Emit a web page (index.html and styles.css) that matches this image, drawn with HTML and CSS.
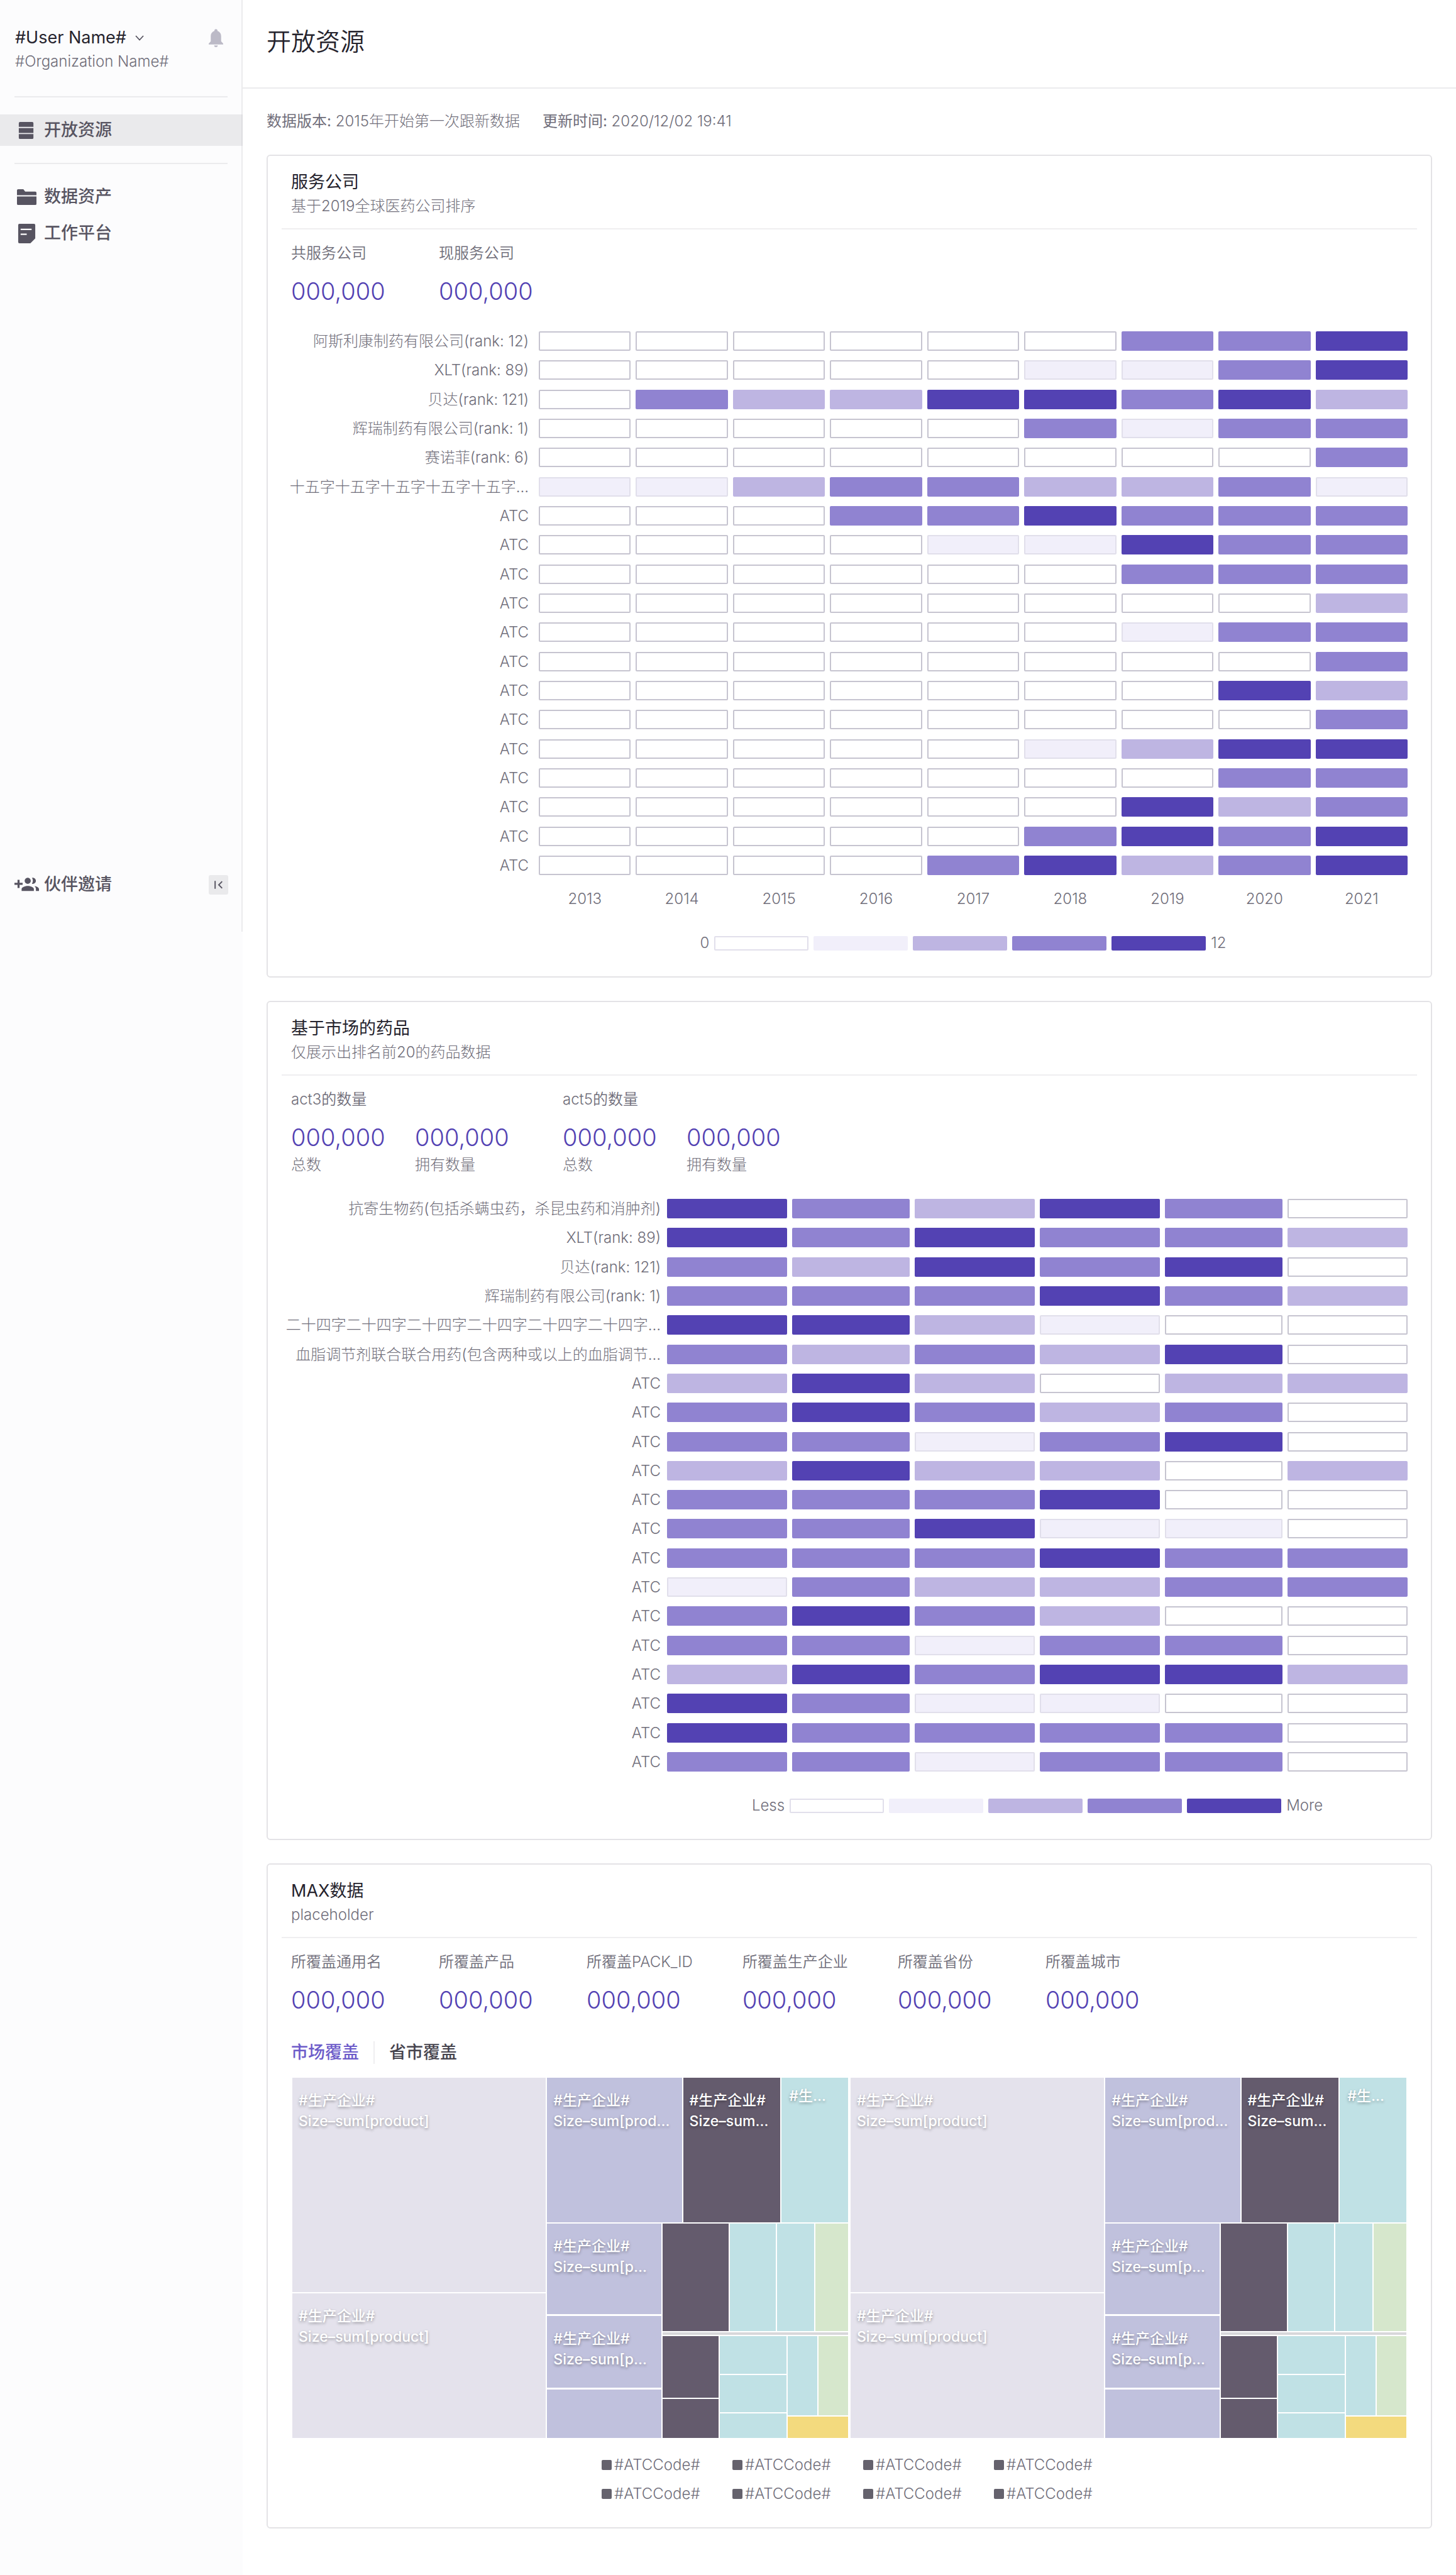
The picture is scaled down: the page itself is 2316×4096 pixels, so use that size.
FILE: index.html
```html
<!DOCTYPE html>
<html lang="zh-CN">
<head>
<meta charset="utf-8">
<meta name="viewport" content="width=device-width, initial-scale=1">
<title>开放资源</title>
<link rel="stylesheet" href="styles.css">
</head>
<body>
<div class="app">
  <aside class="sidebar">
    <div class="panel">
      <div class="profile">
        <div class="profile-top">
          <button class="user" type="button">#User Name#
            <svg class="chevron" viewBox="0 0 14 9"><path d="M1 1l6 6.500L13 1" fill="none" stroke="currentColor" stroke-width="1.800"/></svg>
          </button>
          <button class="bell" type="button" aria-label="通知">
            <svg viewBox="0 0 24 30"><path d="M12 0c-1.500 0-2.500 1-2.500 2.300v1C5.500 4.500 3.400 8 3.400 12v8.500L0 24v1.600h24V24l-3.400-3.500V12c0-4-2.100-7.500-6.100-8.700v-1C14.500 1 13.500 0 12 0zM9 27.200a3 2.800 0 0 0 6 0z" fill="currentColor"/></svg>
          </button>
        </div>
        <div class="org">#Organization Name#</div>
      </div>
      <nav class="nav">
        <hr>
        <a class="nav-item active" href="#open">
          <svg class="nav-icon" viewBox="0 0 32 32"><path d="M5 2h20a2 2 0 0 1 2 2v6H3V4a2 2 0 0 1 2-2zM3 12h24v8H3zM3 22h24v6a2 2 0 0 1-2 2H5a2 2 0 0 1-2-2z" fill="currentColor"/></svg>
          开放资源</a>
        <hr>
        <a class="nav-item" href="#assets">
          <svg class="nav-icon" viewBox="0 0 32 32"><path d="M2 3h8.500l3 4H30a2 2 0 0 1 2 2v4H0V5a2 2 0 0 1 2-2zM0 15h32v12a2 2 0 0 1-2 2H2a2 2 0 0 1-2-2z" fill="currentColor"/></svg>
          数据资产</a>
        <a class="nav-item" href="#workbench">
          <svg class="nav-icon" viewBox="0 0 32 32"><path fill-rule="evenodd" d="M4 0h24a2 2 0 0 1 2 2v22l-8 8H4a2 2 0 0 1-2-2V2a2 2 0 0 1 2-2zM6 8v2.200h18V8zM6 16v2.200h10V16z" fill="currentColor"/></svg>
          工作平台</a>
      </nav>
      <div class="panel-foot">
        <a class="invite" href="#invite">
          <svg class="invite-icon" viewBox="0 0 24 24"><path fill="currentColor" d="M8 10H5V7H3v3H0v2h3v3h2v-3h3v-2zm10 1c1.660 0 2.990-1.340 2.990-3S19.660 5 18 5c-.320 0-.630.050-.910.140.570.810.900 1.790.900 2.860s-.340 2.040-.900 2.860c.280.090.590.140.910.140zm-5 0c1.660 0 2.990-1.340 2.990-3S14.660 5 13 5s-3 1.340-3 3 1.340 3 3 3zm6.620 2.160c.830.730 1.380 1.660 1.380 2.840v2h3v-2c0-1.540-2.370-2.490-4.380-2.840zM13 13c-2 0-6 1-6 3v2h12v-2c0-2-4-3-6-3z"/></svg>
          伙伴邀请</a>
        <button class="collapse" type="button" aria-label="收起">
          <svg viewBox="0 0 32 32"><path d="M10.500 9.500v13M22 10.500L16.500 16l5.500 5.500" fill="none" stroke="currentColor" stroke-width="2"/></svg>
        </button>
      </div>
    </div>
  </aside>

  <main class="main">
    <header class="page-head"><h1>开放资源</h1></header>
    <div class="content">
      <div class="meta">
        <span><b>数据版本:</b> 2015年开始第一次跟新数据</span>
        <span><b>更新时间:</b> 2020/12/02 19:41</span>
      </div>

      <section class="card">
        <header class="card-head">
          <h2>服务公司</h2>
          <p>基于2019全球医药公司排序</p>
        </header>
        <div class="stats">
          <div class="stat"><span class="stat-label">共服务公司</span><span class="num">000,000</span></div>
          <div class="stat"><span class="stat-label">现服务公司</span><span class="num">000,000</span></div>
        </div>
        <div class="heat heat-company" id="company-heat"></div>
        <div class="years">
          <span>2013</span><span>2014</span><span>2015</span><span>2016</span><span>2017</span><span>2018</span><span>2019</span><span>2020</span><span>2021</span>
        </div>
        <div class="legend legend-company">
          <span>0</span><i class="l0"></i><i class="l1"></i><i class="l2"></i><i class="l3"></i><i class="l4"></i><span>12</span>
        </div>
      </section>

      <section class="card">
        <header class="card-head">
          <h2>基于市场的药品</h2>
          <p>仅展示出排名前20的药品数据</p>
        </header>
        <div class="stats stats-grouped">
          <div class="stat">
            <span class="stat-label">act3的数量</span>
            <div class="pair">
              <div><span class="num">000,000</span><small>总数</small></div>
              <div><span class="num">000,000</span><small>拥有数量</small></div>
            </div>
          </div>
          <div class="stat">
            <span class="stat-label">act5的数量</span>
            <div class="pair">
              <div><span class="num">000,000</span><small>总数</small></div>
              <div><span class="num">000,000</span><small>拥有数量</small></div>
            </div>
          </div>
        </div>
        <div class="heat heat-market" id="market-heat"></div>
        <div class="legend legend-market">
          <span>Less</span><i class="l0"></i><i class="l1"></i><i class="l2"></i><i class="l3"></i><i class="l4"></i><span>More</span>
        </div>
      </section>

      <section class="card">
        <header class="card-head">
          <h2>MAX数据</h2>
          <p>placeholder</p>
        </header>
        <div class="stats">
          <div class="stat"><span class="stat-label">所覆盖通用名</span><span class="num">000,000</span></div>
          <div class="stat"><span class="stat-label">所覆盖产品</span><span class="num">000,000</span></div>
          <div class="stat"><span class="stat-label">所覆盖PACK_ID</span><span class="num">000,000</span></div>
          <div class="stat"><span class="stat-label">所覆盖生产企业</span><span class="num">000,000</span></div>
          <div class="stat"><span class="stat-label">所覆盖省份</span><span class="num">000,000</span></div>
          <div class="stat"><span class="stat-label">所覆盖城市</span><span class="num">000,000</span></div>
        </div>
        <div class="tabs">
          <button class="tab selected" type="button">市场覆盖</button>
          <button class="tab" type="button">省市覆盖</button>
        </div>
        <div class="treemaps" id="treemaps">
          <div class="treemap">
            <div class="tm-major">
              <div class="tile mist"><p>#生产企业#</p><p>Size–sum[product]</p></div>
              <div class="tile mist"><p>#生产企业#</p><p>Size–sum[product]</p></div>
            </div>
            <div class="tm-minor">
              <div class="tm-top">
                <div class="tile iris"><p>#生产企业#</p><p>Size–sum[prod…</p></div>
                <div class="tile plum"><p>#生产企业#</p><p>Size–sum…</p></div>
                <div class="tile aqua narrow"><p>#生…</p></div>
              </div>
              <div class="tm-bottom">
                <div class="tm-stack">
                  <div class="tile iris"><p>#生产企业#</p><p>Size–sum[p…</p></div>
                  <div class="tile iris"><p>#生产企业#</p><p>Size–sum[p…</p></div>
                  <div class="tile iris"></div>
                </div>
                <div class="tm-rest">
                  <div class="tm-bars">
                    <div class="tile plum"></div><div class="tile aqua"></div><div class="tile aqua"></div><div class="tile leaf"></div>
                  </div>
                  <div class="tm-rule"></div>
                  <div class="tm-small">
                    <div class="tm-plums"><div class="tile plum"></div><div class="tile plum"></div></div>
                    <div class="tm-aquas"><div class="tile aqua"></div><div class="tile aqua"></div><div class="tile aqua"></div></div>
                    <div class="tm-last"><div class="tile aqua"></div><div class="tile leaf"></div><div class="tile sun"></div></div>
                  </div>
                </div>
              </div>
            </div>
          </div>
        </div>
        <ul class="codes">
          <li>#ATCCode#</li><li>#ATCCode#</li><li>#ATCCode#</li><li>#ATCCode#</li>
          <li>#ATCCode#</li><li>#ATCCode#</li><li>#ATCCode#</li><li>#ATCCode#</li>
        </ul>
      </section>
    </div>
  </main>
</div>
<script src="charts.js"></script>
</body>
</html>
```
FILE: styles.css
```css
* { box-sizing: border-box; }

body {
  margin: 0;
  background: #fff;
  color: #706e7a;
  font: 300 24px/32px Inter, "Noto Sans CJK SC", sans-serif;
}

h1, h2, p, ul { margin: 0; padding: 0; font-weight: inherit; }
button { border: 0; padding: 0; background: none; color: inherit; font: inherit; text-align: left; }
a { color: inherit; text-decoration: none; }
svg { display: block; flex: none; }

.app { display: flex; min-height: 100vh; }

/* Sidebar */
.sidebar { flex: none; width: 386px; background: #fcfcfd; }
.panel {
  display: flex;
  flex-direction: column;
  height: 1482px;
  border-right: 2px solid #ebebed;
}
.profile { padding: 44px 29px 0 24px; }
.profile-top { display: flex; align-items: center; justify-content: space-between; }
.user { display: flex; align-items: center; gap: 14px; color: #25232d; font-size: 27px; font-weight: 400; }
.chevron { width: 14px; height: 9px; color: #575461; }
.bell { color: #bcbac7; }
.bell svg { width: 23px; height: 29px; }
.org { margin-top: 6px; }
.nav { display: flex; flex-direction: column; margin-top: 39px; }
.nav hr { width: 339px; height: 2px; margin: 0 0 27px 23px; border: 0; background: #ebebed; }
.nav-item {
  display: flex;
  align-items: center;
  gap: 12px;
  height: 50px;
  margin-bottom: 8px;
  padding-left: 27px;
  color: #575461;
  font-size: 27px;
  font-weight: 500;
}
.nav-item.active { margin: 0 -2px 27px 0; border-right: 2px solid #dedde1; background: #eaeaec; }
.nav-icon { width: 31px; height: 31px; }
.panel-foot {
  display: flex;
  align-items: center;
  justify-content: space-between;
  margin-top: auto;
  padding: 0 21px 55px 23px;
}
.invite { display: flex; align-items: center; gap: 8px; color: #575461; font-size: 27px; font-weight: 500; line-height: 40px; }
.invite-icon { width: 39px; height: 39px; }
.collapse { border-radius: 3px; background: #eaeaec; color: #575461; }
.collapse svg { width: 31px; height: 31px; }

/* Page */
.main { flex: 1; min-width: 0; }
.page-head { padding: 38px 38px 45px; border-bottom: 2px solid #ebebed; }
.page-head h1 { color: #25232d; font-size: 39px; font-weight: 350; line-height: 56px; }
.content { padding: 36px 38px 72px; }
.meta { display: flex; gap: 36px; margin-bottom: 37px; }
.meta b { color: #706e7a; font-weight: 400; }

/* Cards */
.card { padding: 24px 37px 37px; border: 2px solid #e4e3e6; border-radius: 6px; }
.card + .card { margin-top: 37px; }
.card-head { margin: 0 -15px; padding: 0 15px 19px; border-bottom: 2px solid #efeef0; }
.card-head h2 { color: #25232d; font-size: 27px; font-weight: 400; line-height: 36px; }
.card-head p { margin-top: 4px; }

.stats { display: flex; gap: 79px; margin-top: 22px; }
.stat-label { display: block; margin-bottom: 20px; color: #706e7a; font-weight: 350; }
.stat { min-width: 156px; }
.num { display: block; color: #5342b3; font-size: 38px; font-weight: 350; line-height: 48px; }
.pair { display: flex; }
.pair > div { width: 197px; }
.pair small { display: block; margin-top: 4px; font-size: 24px; }
.stats-grouped { gap: 38px; }

/* Heat maps */
.heat { display: flex; flex-direction: column; justify-content: space-between; }
.heat-company { height: 865px; margin-top: 40px; }
.heat-market { height: 911px; margin-top: 38px; }
.heat-row { display: flex; gap: 16px; height: 31px; line-height: 31px; }
.heat-label { display: flex; flex: none; justify-content: flex-end; width: 378px; white-space: nowrap; }
.cells { display: grid; flex: 1; grid-template-columns: repeat(9, 1fr); column-gap: 8px; }
.cells i { border-radius: 2px; }
.heat-market .heat-row { gap: 10px; }
.heat-market .heat-label { width: 588px; }
.heat-market .cells { grid-template-columns: 99fr 97fr 99fr 99fr 97fr 99fr; }

.l0 { border: 2px solid #c6c4d0; background: #fff; }
.l1 { border: 2px solid #e1dfeb; background: #f1effa; }
.l2 { background: #beb5e2; }
.l3 { background: #9083d1; }
.l4 { background: #5342b3; }

.years { display: grid; grid-template-columns: repeat(9, 1fr); column-gap: 8px; margin: 22px 0 0 394px; text-align: center; }
.legend { display: flex; align-items: center; justify-content: center; gap: 8px; margin-top: 38px; }
.legend i { width: 150px; height: 23px; border-radius: 2px; }
.legend .l0 { border-color: #e1dfeb; }
.legend .l1 { border: 0; }
.legend-company { padding: 0 32px 0 394px; }
.legend-market { padding-left: 598px; }

/* Tabs */
.tabs { display: flex; margin-top: 42px; }
.tab { color: #45434d; font-size: 27px; font-weight: 500; line-height: 36px; }
.tab.selected { color: #6c5bc9; }
.tab + .tab { margin-left: 23px; padding-left: 23px; border-left: 2px solid #efeef0; }

/* Treemaps */
.treemaps { display: grid; grid-template-columns: 1fr 1fr; gap: 4px; height: 573px; margin: 22px 2px 0; }
.treemap, .treemap div { min-width: 0; }
.treemap { display: grid; grid-template-columns: 418fr 496fr; gap: 2px; }
.tm-major { display: grid; grid-template-rows: 354fr 238fr; gap: 2px; }
.tm-minor { display: grid; grid-template-rows: 238fr 354fr; gap: 2px; }
.tm-top { display: grid; grid-template-columns: 223fr 161fr 110fr; gap: 2px; }
.tm-bottom { display: grid; grid-template-columns: 188fr 306fr; gap: 2px; }
.tm-stack { display: grid; grid-template-rows: 151fr 119fr 80fr; gap: 3px; }
.tm-rest { display: grid; grid-template-rows: 178fr 4px 168fr; gap: 2px; }
.tm-bars { display: grid; grid-template-columns: 108fr 76fr 60fr 54fr; gap: 2px; }
.tm-rule { background: #d8d8da; }
.tm-small { display: grid; grid-template-columns: 93fr 109fr 100fr; gap: 2px; }
.tm-plums { display: grid; grid-template-rows: 102fr 64fr; gap: 2px; }
.tm-aquas { display: grid; grid-template-rows: 62fr 62fr 40fr; gap: 2px; }
.tm-last { display: grid; grid-template: 132fr 36fr / 1fr 1fr; gap: 2px; }
.tile { padding: 20px 10px 0; overflow: hidden; color: #fff; font-size: 23px; font-weight: 500; line-height: 33px; text-shadow: 0 2px 4px rgba(0, 0, 0, .35); white-space: nowrap; }
.tile.narrow { padding: 13px 12px 0; }
.mist { background: #e4e2ec; }
.iris { background: #c0c1dd; }
.plum { background: #645b6d; }
.aqua { background: #c0e1e5; }
.leaf { background: #d6e7cc; }
.sun { grid-column: 1 / -1; background: #f3da7e; }

.codes { display: grid; grid-template-columns: repeat(4, 208px); justify-content: center; gap: 14px 0; margin-top: 27px; padding-left: 44px; list-style: none; }
.codes li { display: flex; align-items: center; gap: 4px; }
.codes li::before { content: ""; width: 16px; height: 16px; border-radius: 2px; background: #65626d; }
```
FILE: charts.js
```js
// One entry per row: label, then a level from 0 to 4 for each column.
const company = [
  ["阿斯利康制药有限公司(rank: 12)", "000000334"],
  ["XLT(rank: 89)", "000001134"],
  ["贝达(rank: 121)", "032244342"],
  ["辉瑞制药有限公司(rank: 1)", "000003133"],
  ["赛诺菲(rank: 6)", "000000003"],
  ["十五字十五字十五字十五字十五字…", "112332231"],
  ["ATC", "000334333"],
  ["ATC", "000011433"],
  ["ATC", "000000333"],
  ["ATC", "000000002"],
  ["ATC", "000000133"],
  ["ATC", "000000003"],
  ["ATC", "000000042"],
  ["ATC", "000000003"],
  ["ATC", "000001244"],
  ["ATC", "000000033"],
  ["ATC", "000000423"],
  ["ATC", "000003434"],
  ["ATC", "000034234"]
];

const market = [
  ["抗寄生物药(包括杀螨虫药，杀昆虫药和消肿剂)", "432430"],
  ["XLT(rank: 89)", "434332"],
  ["贝达(rank: 121)", "324340"],
  ["辉瑞制药有限公司(rank: 1)", "333432"],
  ["二十四字二十四字二十四字二十四字二十四字二十四字…", "442100"],
  ["血脂调节剂联合联合用药(包含两种或以上的血脂调节…", "323240"],
  ["ATC", "242022"],
  ["ATC", "343230"],
  ["ATC", "331340"],
  ["ATC", "242202"],
  ["ATC", "333400"],
  ["ATC", "334110"],
  ["ATC", "333433"],
  ["ATC", "132233"],
  ["ATC", "343200"],
  ["ATC", "331330"],
  ["ATC", "243442"],
  ["ATC", "431100"],
  ["ATC", "433330"],
  ["ATC", "331330"]
];

function drawHeat(id, rows) {
  document.getElementById(id).innerHTML = rows.map(([label, levels]) =>
    `<div class="heat-row"><span class="heat-label">${label}</span><div class="cells">` +
    [...levels].map(n => `<i class="l${n}"></i>`).join("") +
    "</div></div>").join("");
}

drawHeat("company-heat", company);
drawHeat("market-heat", market);

const maps = document.getElementById("treemaps");
maps.append(maps.firstElementChild.cloneNode(true));
```
